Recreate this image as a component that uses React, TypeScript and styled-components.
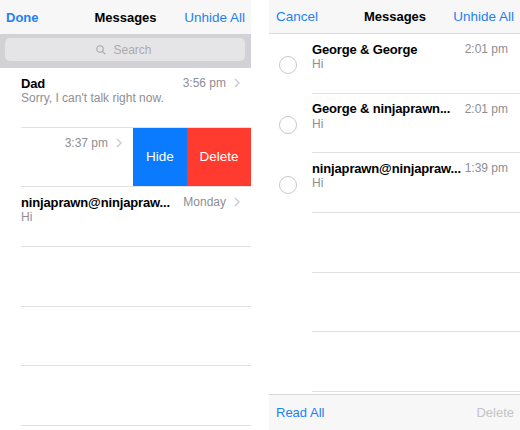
import React from "react"
import styled, { createGlobalStyle } from "styled-components"

const ROW_H = "59.7px"
const BLUE = "#1f80f3"
const GREY = "#8e8e93"
const LINE = "#e1e1e4"

const GlobalStyle = createGlobalStyle`
	html, body {
		margin: 0;
		padding: 0;
		background: #fff;
	}
	body {
		font-family: "Liberation Sans", Arial, sans-serif;
		-webkit-font-smoothing: antialiased;
	}
`

interface Message {
	title: string
	preview: string
	time: string
}

const inbox: Message[] = [
	{ title: "Dad", preview: "Sorry, I can't talk right now.", time: "3:56 pm" },
	{ title: "", preview: "", time: "3:37 pm" },
	{ title: "ninjaprawn@ninjapraw...", preview: "Hi", time: "Monday" },
]

const hidden: Message[] = [
	{ title: "George & George", preview: "Hi", time: "2:01 pm" },
	{ title: "George & ninjaprawn...", preview: "Hi", time: "2:01 pm" },
	{ title: "ninjaprawn@ninjapraw...", preview: "Hi", time: "1:39 pm" },
]

function Chevron() {
	return (
		<ChevronIcon width="6" height="10" viewBox="0 0 6 10">
			<polyline points="1,1 5,5 1,9" fill="none" stroke="#c7c7cc" strokeWidth="1.3" />
		</ChevronIcon>
	)
}

function SearchIcon() {
	return (
		<svg width="10" height="10" viewBox="0 0 10 10">
			<circle cx="4" cy="4" r="3.2" fill="none" stroke="#a4a4a9" strokeWidth="1.1" />
			<line x1="6.4" y1="6.4" x2="9.2" y2="9.2" stroke="#a4a4a9" strokeWidth="1.2" />
		</svg>
	)
}

function MessageText(props: { message: Message; chevron?: boolean }) {
	const { message, chevron } = props
	return (
		<>
			<TopLine>
				<Title>{message.title}</Title>
				<Time>{message.time}</Time>
				{chevron && <Chevron />}
			</TopLine>
			<Preview>{message.preview}</Preview>
		</>
	)
}

export default function App() {
	return (
		<Page>
			<GlobalStyle />

			<Phone>
				<NavBar>
					<NavButton bold>Done</NavButton>
					<NavTitle>Messages</NavTitle>
					<NavButton right>Unhide All</NavButton>
				</NavBar>
				<SearchBar>
					<SearchField>
						<SearchIcon />
						<span>Search</span>
					</SearchField>
				</SearchBar>
				<List>
					<Cell>
						<CellBody>
							<MessageText message={inbox[0]} chevron />
						</CellBody>
					</Cell>
					<Cell>
						{/* row swiped left: only the time is still in view */}
						<CellBody>
							<MessageText message={inbox[1]} chevron />
						</CellBody>
						<Action color="#0a7bff" width={54}>Hide</Action>
						<Action color="#ff3b30" width={64}>Delete</Action>
					</Cell>
					<Cell>
						<CellBody>
							<MessageText message={inbox[2]} chevron />
						</CellBody>
					</Cell>
					<Cell />
					<Cell />
					<Cell />
				</List>
			</Phone>

			<Phone>
				<NavBar bordered>
					<NavButton>Cancel</NavButton>
					<NavTitle>Messages</NavTitle>
					<NavButton right>Unhide All</NavButton>
				</NavBar>
				<List>
					{hidden.map(m => (
						<EditRow key={m.title + m.time}>
							<SelectCol>
								<Radio />
							</SelectCol>
							<Cell>
								<CellBody tight>
									<MessageText message={m} />
								</CellBody>
							</Cell>
						</EditRow>
					))}
					{[0, 1, 2].map(i => (
						<EditRow key={i}>
							<SelectCol />
							<Cell />
						</EditRow>
					))}
				</List>
				<Toolbar>
					<ToolButton>Read All</ToolButton>
					<ToolButton disabled>Delete</ToolButton>
				</Toolbar>
			</Phone>
		</Page>
	)
}

const Page = styled.div`
	width: 520px;
	height: 430px;
	display: flex;
	gap: 18px;
	overflow: hidden;
`

const Phone = styled.div`
	width: 251px;
	flex-shrink: 0;
	display: flex;
	flex-direction: column;
	overflow: hidden;
	background: #fff;
`

const NavBar = styled.header<{ bordered?: boolean }>`
	height: 34px;
	flex-shrink: 0;
	box-sizing: border-box;
	display: grid;
	grid-template-columns: 1fr auto 1fr;
	align-items: center;
	padding: 0 6px 0 6px;
	background: #f7f7f7;
	${p => (p.bordered ? "border-bottom: 1px solid #dadadd; padding-left: 7px;" : "")}
`

const NavButton = styled.span<{ bold?: boolean; right?: boolean }>`
	color: ${BLUE};
	font-size: ${p => (p.bold ? "13px" : "13.5px")};
	font-weight: ${p => (p.bold ? 700 : 400)};
	justify-self: ${p => (p.right ? "end" : "start")};
	white-space: nowrap;
`

const NavTitle = styled.span`
	font-size: 13px;
	font-weight: 700;
	color: #000;
`

const SearchBar = styled.div`
	height: 34px;
	flex-shrink: 0;
	box-sizing: border-box;
	padding: 4px 6px 6px 5px;
	background: #d2d2d6;
`

const SearchField = styled.div`
	height: 23px;
	border-radius: 5px;
	background: #e5e5e8;
	display: flex;
	align-items: center;
	justify-content: center;
	gap: 7px;
	color: #aaaaaf;
	font-size: 12px;
	padding-right: 2px;
`

const List = styled.div`
	flex: 1;
	display: flex;
	flex-direction: column;
	overflow: hidden;
`

const Cell = styled.div`
	height: ${ROW_H};
	flex-shrink: 0;
	margin-left: 21px;
	box-sizing: border-box;
	border-bottom: 1px solid ${LINE};
	display: flex;
	overflow: hidden;

	${() => EditRow} & {
		margin-left: 0;
		flex: 1;
	}
`

const CellBody = styled.div<{ tight?: boolean }>`
	flex: 1;
	min-width: 0;
	padding: 7px ${p => (p.tight ? "12px" : "11px")} 0 0;
`

const Action = styled.div<{ color: string; width: number }>`
	width: ${p => p.width}px;
	flex-shrink: 0;
	background: ${p => p.color};
	color: #fff;
	font-size: 13.5px;
	display: flex;
	align-items: center;
	justify-content: center;
	padding-bottom: 1px;
`

const TopLine = styled.div`
	display: flex;
	align-items: center;
	height: 16px;
`

const Title = styled.span`
	flex: 1;
	min-width: 0;
	font-size: 13px;
	font-weight: 700;
	letter-spacing: -0.15px;
	color: #000;
	white-space: nowrap;
	overflow: hidden;
	margin-right: 4px;
`

const Time = styled.span`
	font-size: 12px;
	color: ${GREY};
	white-space: nowrap;
`

const ChevronIcon = styled.svg`
	margin-left: 8px;
	flex-shrink: 0;
`

const Preview = styled.div`
	font-size: 12px;
	line-height: 15px;
	height: 15px;
	color: ${GREY};
	white-space: nowrap;
	overflow: hidden;
`

const EditRow = styled.div`
	height: ${ROW_H};
	flex-shrink: 0;
	display: flex;
`

const SelectCol = styled.div`
	width: 43px;
	flex-shrink: 0;
	display: flex;
	align-items: center;
	padding-left: 10px;
	box-sizing: border-box;
`

const Radio = styled.span`
	width: 18px;
	height: 18px;
	box-sizing: border-box;
	border-radius: 50%;
	border: 1px solid #c8c8cc;
	margin-top: 3px;
`

const Toolbar = styled.footer`
	height: 36px;
	flex-shrink: 0;
	box-sizing: border-box;
	border-top: 1px solid #d9d9dc;
	background: #f7f7f7;
	display: flex;
	align-items: center;
	justify-content: space-between;
	padding: 0 6px 0 7px;
`

const ToolButton = styled.span<{ disabled?: boolean }>`
	font-size: 13px;
	color: ${p => (p.disabled ? "#c4c4c8" : BLUE)};
`
